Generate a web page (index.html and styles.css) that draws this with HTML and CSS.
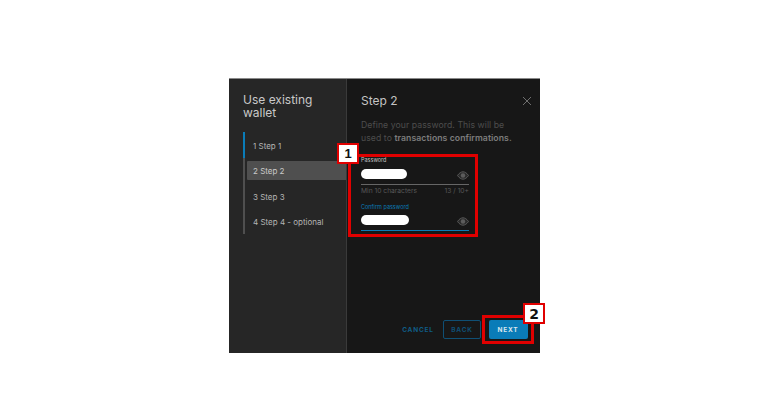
FILE: index.html
```html
<!DOCTYPE html>
<html lang="en">
<head>
<meta charset="utf-8">
<title>Use existing wallet</title>
<link rel="stylesheet" href="styles.css">
</head>
<body>
<div class="modal">
  <aside class="side">
    <h1 class="side-title">Use existing wallet</h1>
    <div class="steps">
      <div class="step">1 Step 1</div>
      <div class="step step-active">2 Step 2</div>
      <div class="step">3 Step 3</div>
      <div class="step">4 Step 4 - optional</div>
    </div>
  </aside>
  <main class="content">
    <header class="head">
      <h2 class="head-title">Step 2</h2>
      <svg class="close" width="10" height="10" viewBox="0 0 10 10"><path d="M1 1l8 8M9 1l-8 8" stroke="#6f6f6f" stroke-width="1" fill="none"/></svg>
    </header>
    <div class="desc">
      <div>Define your password. This will be</div>
      <div>used to <b>transactions confirmations.</b></div>
    </div>
    <div class="form">
      <div class="badge badge-one">1</div>
      <div class="field">
        <div class="label">Password</div>
        <div class="input">
          <span class="pill"></span>
          <svg class="eye" width="12" height="9" viewBox="0 0 13 9"><path d="M.5 4.500C2.500 1.700 4.500.5 6.500.5s4 1.200 6 4c-2 2.800-4 4-6 4s-4-1.200-6-4z" fill="#2b2b2b" stroke="#5c5c5c"/><circle cx="6.500" cy="4.500" r="2.400" fill="#5c5c5c"/></svg>
        </div>
        <div class="hint"><span>Min 10 characters</span><span>13 / 10+</span></div>
      </div>
      <div class="field field-focus">
        <div class="label">Confirm password</div>
        <div class="input">
          <span class="pill pill-wide"></span>
          <svg class="eye" width="12" height="9" viewBox="0 0 13 9"><path d="M.5 4.500C2.500 1.700 4.500.5 6.500.5s4 1.200 6 4c-2 2.800-4 4-6 4s-4-1.200-6-4z" fill="#2b2b2b" stroke="#5c5c5c"/><circle cx="6.500" cy="4.500" r="2.400" fill="#5c5c5c"/></svg>
        </div>
      </div>
    </div>
    <footer class="actions">
      <button class="btn btn-link">CANCEL</button>
      <button class="btn btn-outline">BACK</button>
      <div class="next-wrap">
        <div class="badge badge-two">2</div>
        <button class="btn btn-primary">NEXT</button>
      </div>
    </footer>
  </main>
</div>
</body>
</html>
```

FILE: styles.css
```css
html, body { margin: 0; padding: 0; background: #fff; }
body {
  width: 768px;
  height: 413px;
  overflow: hidden;
  font-family: Inter, "Liberation Sans", sans-serif;
  display: flex;
  align-items: flex-start;
  justify-content: flex-start;
  padding: 78px 0 0 229px;
  box-sizing: border-box;
}
.modal {
  width: 311px;
  height: 275px;
  display: flex;
  border-top: 1px solid #8a8a8a;
  box-sizing: border-box;
  background: #171717;
}
.side {
  width: 118px;
  flex: none;
  background: #262626;
  border-right: 1px solid #3a3a3a;
  box-sizing: border-box;
  padding: 14px 0 0 14px;
}
.side-title {
  margin: 0;
  font-size: 12px;
  line-height: 13px;
  font-weight: 400;
  color: #c9c9c9;
  width: 90px;
}
.steps {
  margin-top: 13px;
  height: 102px;
  border-left: 2px solid #4f4f4f;
  position: relative;
  padding: 4px 0 0 2px;
  box-sizing: border-box;
  display: flex;
  flex-direction: column;
  gap: 6.300px;
}
.steps::before {
  content: "";
  position: absolute;
  left: -2px;
  top: 0;
  width: 2px;
  height: 26px;
  background: #0a7cb8;
}
.step {
  height: 19px;
  padding-left: 6px;
  font-size: 8px;
  line-height: 20px;
  color: #b4b4b4;
  border-radius: 1px 0 0 1px;
}
.step-active { background: #4f4f4f; color: #c9c9c9; }
.content {
  flex: 1;
  display: flex;
  flex-direction: column;
  padding: 14px 14px 9px 14px;
  box-sizing: border-box;
  min-width: 0;
}
.head { display: flex; align-items: center; justify-content: space-between; height: 15px; }
.head-title { margin: 0; font-size: 12px; font-weight: 400; color: #c4c4c4; }
.close { margin-right: -6px; }
.desc {
  margin: 11px -6px 0 0;
  font-size: 8.700px;
  line-height: 13px;
  color: #4d4d4d;
  letter-spacing: .06px;
  white-space: nowrap;
}
.desc b { font-weight: 600; color: #7c7c7c; }
.form {
  margin: 9px 0 0 -13px;
  width: 130px;
  height: 83px;
  border: 3px solid #e00000;
  box-sizing: border-box;
  padding: 0 6px 0 10px;
  position: relative;
}
.badge {
  position: absolute;
  background: #fff;
  border: 2px solid #e00000;
  color: #111;
  font-weight: 700;
  line-height: 1;
  display: flex;
  align-items: center;
  justify-content: center;
  box-sizing: border-box;
  z-index: 2;
}
.badge-one { left: -14px; top: -14px; width: 22px; height: 21px; font-size: 13px; font-family: "Liberation Sans", sans-serif; }
.badge-two { left: 38px; top: -15px; width: 22px; height: 21px; font-size: 14px; font-family: "DejaVu Sans", sans-serif; }
.label { font-size: 5.500px; line-height: 6px; color: #c4c4c4; }
.field-focus .label { color: #0a7cb8; margin-top: 8px; }
.input {
  display: flex;
  align-items: flex-start;
  justify-content: space-between;
  height: 15px;
  margin-top: 6px;
  border-bottom: 1px solid #666;
}
.field-focus .input { border-bottom-color: #0a7cb8; height: 15px; margin-top: 5px; }
.pill { width: 46px; height: 10px; border-radius: 5px; background: #fff; }
.pill-wide { width: 48px; }
.eye { margin-top: 2px; }
.hint {
  display: flex;
  justify-content: space-between;
  font-size: 6.700px;
  line-height: 9px;
  margin-top: 2px;
  color: #575757;
}
.actions {
  margin-top: auto;
  display: flex;
  align-items: center;
  justify-content: flex-end;
  gap: 8px;
  margin-right: -8px;
}
.btn {
  font-family: inherit;
  font-size: 6.500px;
  font-weight: 700;
  letter-spacing: .8px;
  height: 19px;
  padding: 0;
  border-radius: 2px;
  background: transparent;
  border: 1px solid transparent;
}
.btn-link { color: #0f5c85; width: 34px; }
.btn-outline { color: #0f4f74; width: 38px; border-color: #0f4f74; }
.next-wrap {
  position: relative;
  border: 3px solid #e00000;
  width: 52px;
  height: 29px;
  box-sizing: border-box;
  display: flex;
  align-items: center;
  justify-content: center;
  margin-left: -7px;
}
.btn-primary { background: #0a7cb8; color: #d9e6ee; width: 39px; }
```
